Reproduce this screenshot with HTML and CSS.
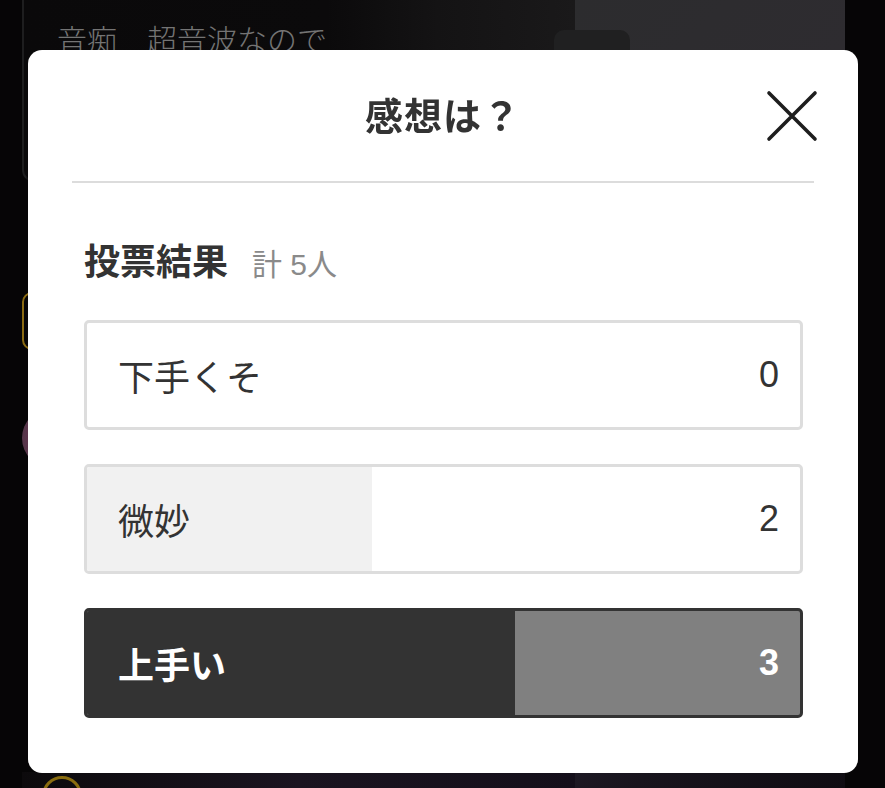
FILE: index.html
```html
<!DOCTYPE html>
<html lang="ja">
<head>
<meta charset="utf-8">
<title>感想は？</title>
<link rel="stylesheet" href="styles.css">
</head>
<body>
<div class="page">
  <div class="page-main">
    <div class="post-card">
      <p class="post-text">音痴　超音波なので</p>
      <div class="post-chip"></div>
    </div>
    <div class="badge-pill"></div>
    <div class="avatar"></div>
    <div class="bottom-row"><span class="gold-ring"></span></div>
  </div>
  <div class="page-side"></div>
</div>

<div class="overlay">
  <div class="modal" role="dialog" aria-label="感想は？">
    <div class="modal-header">
      <h2 class="modal-title">感想は？</h2>
      <button class="close-btn" aria-label="閉じる">
        <svg width="52" height="52" viewBox="0 0 52 52">
          <path d="M3 3 L49 49 M49 3 L3 49" stroke="#1e1e1e" stroke-width="3.6" stroke-linecap="round" fill="none"/>
        </svg>
      </button>
    </div>
    <div class="modal-body">
      <div class="result-head">
        <span class="result-title">投票結果</span>
        <span class="result-total">計 5人</span>
      </div>
      <ul class="options">
        <li class="option">
          <span class="fill" style="width:0%"></span>
          <span class="label">下手くそ</span>
          <span class="count">0</span>
        </li>
        <li class="option">
          <span class="fill" style="width:40%"></span>
          <span class="label">微妙</span>
          <span class="count">2</span>
        </li>
        <li class="option selected">
          <span class="fill" style="width:60%"></span>
          <span class="label">上手い</span>
          <span class="count">3</span>
        </li>
      </ul>
    </div>
  </div>
</div>
</body>
</html>
```

FILE: styles.css
```css
* { box-sizing: border-box; }

html, body {
  margin: 0;
  padding: 0;
  width: 885px;
  height: 788px;
  overflow: hidden;
  background: #060506;
  font-family: "Liberation Sans", "Noto Sans CJK JP", sans-serif;
}

/* background page (behind the dialog) */
.page {
  display: flex;
  height: 788px;
  padding-left: 22px;
  padding-right: 40px;
}

.page-main {
  width: 553px;
  display: flex;
  flex-direction: column;
}

.post-card {
  height: 182px;
  border-left: 2px solid #1e1e1f;
  border-bottom: 2px solid #161617;
  border-bottom-left-radius: 12px;
  background: linear-gradient(90deg, #0a090a 0%, #0b0a0b 55%, #141314 75%, #1a191a 100%);
  position: relative;
  padding: 18px 0 0 33px;
}

.post-text {
  margin: 0;
  font-size: 30px;
  line-height: 40px;
  color: #747474;
  font-family: "Noto Sans CJK JP", sans-serif;
  font-weight: 300;
}

.post-chip {
  position: absolute;
  left: 530px;
  top: 30px;
  width: 76px;
  height: 40px;
  border-radius: 10px;
  background: #202021;
}

.badge-pill {
  margin-top: 110px;
  width: 40px;
  height: 58px;
  border: 2px solid #8a6a12;
  border-radius: 10px;
}

.avatar {
  margin-top: 58px;
  width: 60px;
  height: 60px;
  border-radius: 50%;
  background: radial-gradient(circle at 60% 50%, #7a2a55, #4a3a46);
}

.bottom-row {
  margin-top: auto;
  height: 16px;
  position: relative;
  background: linear-gradient(90deg, #0c0a0c, #1a1420 50%, #140f1a);
}

.gold-ring {
  position: absolute;
  left: 20px;
  top: 4px;
  width: 40px;
  height: 40px;
  border: 3px solid #8a6d10;
  border-radius: 50%;
}

.page-side {
  flex: 1;
  background: linear-gradient(135deg, #2c2c2e 0%, #2e2c30 30%, #2b2534 55%, #18141d 80%, #0f0c12 100%);
}

/* dialog */
.overlay {
  position: fixed;
  inset: 0;
}

.modal {
  position: absolute;
  left: 28px;
  top: 50px;
  width: 830px;
  height: 723px;
  background: #fff;
  border-radius: 14px;
  padding: 0 44px;
  display: flex;
  flex-direction: column;
}

.modal-header {
  height: 133px;
  border-bottom: 2px solid #dcdcdc;
  display: flex;
  align-items: center;
  justify-content: center;
  position: relative;
  padding-bottom: 4px;
}

.modal-title {
  margin: 0;
  font-family: "Noto Sans CJK JP", sans-serif;
  font-size: 38px;
  font-weight: 700;
  color: #333;
  line-height: 50px;
  letter-spacing: 1px;
}

.close-btn {
  position: absolute;
  right: -4px;
  top: 40px;
  width: 52px;
  height: 52px;
  padding: 0;
  border: 0;
  background: none;
  display: flex;
}

.modal-body {
  padding: 52px 11px 0 12px;
}

.result-head {
  display: flex;
  align-items: baseline;
  gap: 24px;
  height: 48px;
  line-height: 48px;
}

.result-title {
  font-family: "Noto Sans CJK JP", sans-serif;
  font-size: 36px;
  font-weight: 700;
  color: #333;
}

.result-total {
  font-size: 30px;
  color: #8a8a8a;
}

.options {
  list-style: none;
  margin: 37px 0 0;
  padding: 0;
  display: flex;
  flex-direction: column;
  gap: 34px;
}

.option {
  position: relative;
  height: 110px;
  border: 3px solid #dddddd;
  border-radius: 5px;
  background: #fff;
  overflow: hidden;
  display: flex;
  align-items: center;
  justify-content: space-between;
  padding: 0 21px 0 31px;
  color: #333;
  font-size: 36px;
  line-height: 48px;
}

.fill {
  position: absolute;
  left: 0;
  top: 0;
  bottom: 0;
  background: #f1f1f1;
}

.label, .count {
  position: relative;
}

.label {
  font-family: "Noto Sans CJK JP", sans-serif;
  font-weight: 400;
}

.count {
  font-size: 36px;
}

.option.selected {
  border-color: #333;
  background: #808080;
  color: #fff;
  font-weight: 700;
}

.option.selected .fill {
  background: #333;
}

.option.selected .label {
  font-weight: 700;
}
```
